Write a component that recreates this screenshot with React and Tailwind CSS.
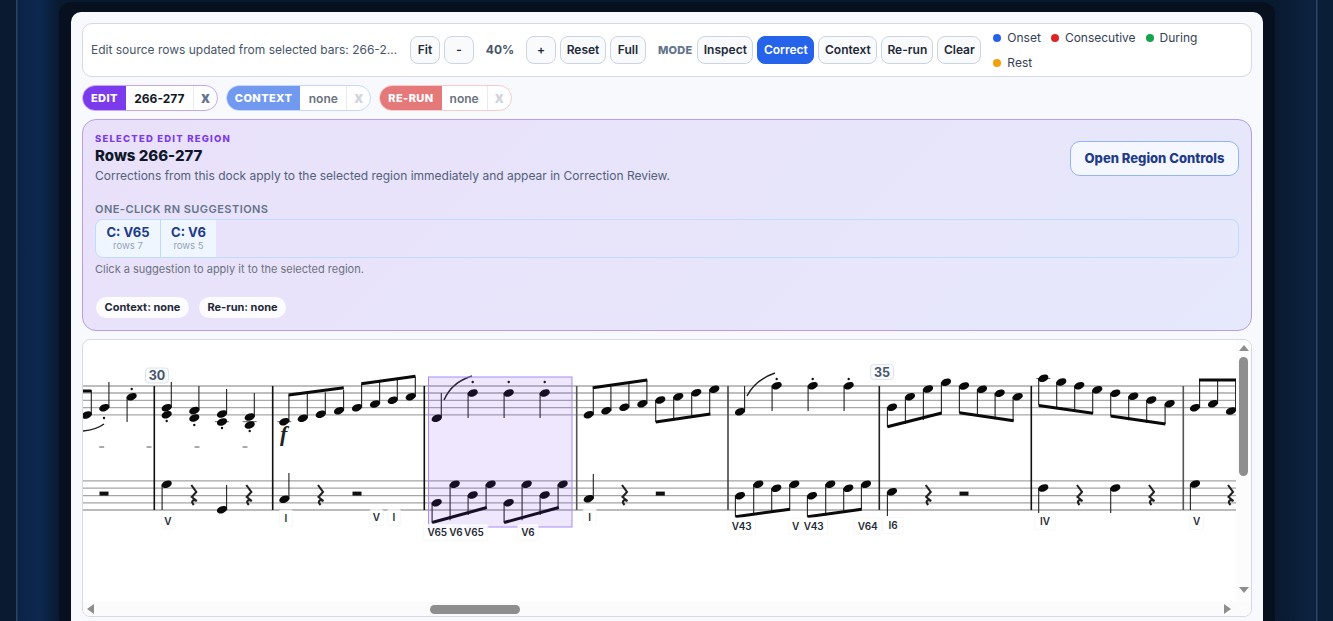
import React from "react";

const Btn = ({ children, active, w }) => (
  <button
    className={`h-[28px] shrink-0 rounded-lg border text-xs font-semibold ${w} ${
      active ? "border-[#2563eb] bg-[#2563eb] text-white" : "border-[#cbd5e1] bg-[#f8fafc] text-[#1f2937]"
    }`}
  >
    {children}
  </button>
);

const Legend = ({ color, label }) => (
  <span className="flex items-center gap-[6px] text-xs text-[#334155]">
    <span className={`h-2 w-2 rounded-full ${color}`} />
    {label}
  </span>
);

const Chip = ({ label, value, border, labelClass, valueClass, xClass, valueW }) => (
  <div className={`flex h-[26px] items-stretch overflow-hidden rounded-full border bg-white ${border}`}>
    <span className={`flex items-center px-2 pt-[1px] text-[11px] font-extrabold tracking-[0.4px] text-white ${labelClass}`}>{label}</span>
    <span className={`flex items-center justify-center pt-[1px] text-xs ${valueW} ${valueClass}`}>{value}</span>
    <span className={`flex w-[24px] items-center justify-center border-l border-[#e8eaf0] pt-[1px] text-[15px] font-extrabold ${xClass}`}>x</span>
  </div>
);

const topLines = [386, 393, 400.3, 407.6, 414.8];
const bottomLines = [480.8, 488.2, 495.6, 502.8, 510];
const bars = [
  [154.3, "#111"], [272.7, "#111"], [424.3, "#111"], [576.7, "#555"],
  [728, "#444"], [879.3, "#222"], [1031.3, "#111"], [1183.3, "#555"],
];

// x, y, stem end (null = none); the stem goes to the side the end points at
const N = ({ x, y, to }) => {
  const up = to !== undefined && to < y;
  const sx = up ? x + 4.6 : x - 4.6;
  return (
    <g>
      {to !== undefined && <line x1={sx} y1={y} x2={sx} y2={to} stroke="#222" strokeWidth="1.1" />}
      <ellipse cx={x} cy={y} rx="5.3" ry="3.5" transform={`rotate(-22 ${x} ${y})`} fill="#0a0a0a" />
    </g>
  );
};
const Beam = ({ x1, y1, x2, y2, w = 3 }) => (
  <line x1={x1} y1={y1} x2={x2} y2={y2} stroke="#0a0a0a" strokeWidth={w} />
);
const Dot = ({ x, y }) => <circle cx={x} cy={y} r="1.2" fill="#111" />;
const Dash = ({ x, y = 447 }) => <line x1={x - 2.5} y1={y} x2={x + 2.5} y2={y} stroke="#555" strokeWidth="1" />;
const Ledger = ({ x, y }) => <line x1={x - 7} y1={y} x2={x + 7} y2={y} stroke="#666" strokeWidth="1" />;
const Rest = ({ x, y = 495 }) => (
  <path
    d={`M${x - 2} ${y - 10} L${x + 3} ${y - 3} L${x - 1.5} ${y + 2} L${x + 3.5} ${y + 6} C${x} ${y + 4} ${x - 3} ${y + 6} ${x + 0.5} ${y + 10}`}
    fill="none"
    stroke="#222"
    strokeWidth="2.1"
  />
);
const HalfRest = ({ x }) => <rect x={x - 4.5} y={491.6} width="9" height="4" fill="#111" />;
const Slur = ({ d }) => <path d={d} fill="none" stroke="#222" strokeWidth="1.5" />;

// a row of notes with stems going the same way, by offset
const Run = ({ xs, ys, off }) =>
  xs.map((x, i) => <N key={x} x={x} y={ys[i]} to={ys[i] + off[i]} />);

const Measure = ({ x, y, t }) => (
  <g>
    <rect x={x - 11.5} y={y - 7.5} width="23" height="15" rx="3" fill="#f8fafc" stroke="#dfe3ea" />
    <text x={x} y={y + 4.5} textAnchor="middle" fontFamily="Inter, sans-serif" fontSize="12.5" fontWeight="700" fill="#475569">
      {t}
    </text>
  </g>
);

const labels = [
  [168, 521, "V"], [286, 518, "I"], [376.5, 517.5, "V"], [394, 517.5, "I"],
  [741.7, 526, "V43"], [795.7, 526, "V"], [813.7, 526, "V43"], [867.7, 526, "V64"], [893, 525.5, "I6"],
  [1045, 521.7, "IV"], [1196.7, 521.7, "V"], [589.7, 517, "I"],
  [437.3, 532.3, "V65"], [456, 532.3, "V6"], [474, 532.3, "V65"], [528, 532.3, "V6"],
];

const Score = () => (
  <svg viewBox="83 340 1153 262" className="block h-[262px] w-[1153px] shrink-0">
    {topLines.map((y) => (
      <line key={y} x1="82" x2="1236" y1={y} y2={y} stroke="#a8a8a8" strokeWidth="1.3" />
    ))}
    {bottomLines.map((y) => (
      <line key={y} x1="82" x2="1236" y1={y} y2={y} stroke="#a4a4a4" strokeWidth="1.3" />
    ))}
    {bars.map(([x, c]) => (
      <line key={x} x1={x} x2={x} y1="386" y2="510" stroke={c} strokeWidth="1.6" />
    ))}

    {/* bar 29 */}
    <N x={86.7} y={415} to={390} />
    <Beam x1={82} y1={391} x2={91.3} y2={391} />
    <N x={104.3} y={407.7} to={382} />
    <Dot x={104} y={418} />
    <N x={131.7} y={396.7} to={422} />
    <Dot x={131.7} y={389} />
    <Slur d="M82 431 Q96 430 104 424" />
    <Dash x={101.7} />
    <Dash x={149} />
    <HalfRest x={104} />

    {/* bar 30 */}
    <Measure x={157} y={375.5} t="30" />
    <N x={166.7} y={407.7} to={382} /><N x={166.7} y={414.7} /><Dot x={166.7} y={421} />
    <N x={194.3} y={410.5} to={386} /><N x={194.3} y={418} /><Dot x={194.3} y={425} />
    <Ledger x={222} y={421.7} />
    <N x={222} y={414} to={389} /><N x={222} y={422} /><Dot x={222} y={428} />
    <Ledger x={249.7} y={421.7} />
    <N x={249.7} y={417} to={393} /><N x={249.7} y={425} /><Dot x={249.7} y={431} />
    <Dash x={197} />
    <Dash x={245} />
    <N x={166.7} y={484.3} to={510} />
    <Rest x={193.3} />
    <N x={222} y={509.7} to={485} />
    <Rest x={248.3} />

    {/* bar 31 */}
    <Ledger x={284.3} y={421.7} />
    <Run xs={[284.3, 302.7, 320.7, 339]} ys={[421.7, 418.3, 414.3, 410.7]} off={[-27, -24.5, -22, -21]} />
    <Beam x1={288.6} y1={395} x2={343.8} y2={387.7} />
    <Run xs={[357, 375, 392.7, 410.7]} ys={[407.7, 404, 400.3, 396.7]} off={[-24, -22.5, -21, -20]} />
    <Beam x1={361.3} y1={383.7} x2={415.5} y2={376.3} />
    <text x={280} y={441} fontFamily="Liberation Serif, serif" fontStyle="italic" fontWeight="700" fontSize="22" fill="#222">f</text>
    <N x={284.3} y={499.3} to={473} />
    <Rest x={320} />
    <HalfRest x={357} />

    {/* bar 32, selected */}
    <N x={436.7} y={418.3} to={393} />
    <Slur d="M444 400 Q452 382 472 376" />
    <N x={472.7} y={393} to={418} /><Dot x={472.7} y={382} />
    <N x={508.7} y={393} to={418} /><Dot x={508.7} y={382} />
    <N x={544.7} y={393} to={418} /><Dot x={544.7} y={382} />
    <Run xs={[436.7, 454.7, 472.7, 490.7]} ys={[502.7, 484.3, 495, 484.3]} off={[20, 36, 20, 24]} />
    <Beam x1={432.1} y1={522.5} x2={486.8} y2={507.5} />
    <Run xs={[508.7, 526.7, 544.7, 562.7]} ys={[502.7, 484.3, 495, 484.3]} off={[20, 36, 20, 24]} />
    <Beam x1={504.1} y1={522.5} x2={558.8} y2={507.5} />
    <rect x="428.5" y="377" width="143.5" height="150" fill="#7c3aed" fillOpacity="0.12" stroke="#a78bfa" />

    {/* bar 33 */}
    <Run xs={[588.7, 606.3, 624.3, 642.3]} ys={[414.7, 410.7, 407.3, 403.7]} off={[-27, -25, -24, -23]} />
    <Beam x1={592.7} y1={387.7} x2={647.3} y2={380} />
    <Run xs={[660.3, 678.3, 696.3, 714.3]} ys={[400, 396.7, 392.7, 389.3]} off={[22, 23, 23, 25]} />
    <Beam x1={655.7} y1={422} x2={710.3} y2={414} />
    <N x={588.7} y={498.7} to={474} />
    <Rest x={624} />
    <HalfRest x={660.3} />

    {/* bar 34 */}
    <N x={740} y={411.7} to={386} />
    <Slur d="M747 396 Q755 380 775 373" />
    <N x={776.7} y={385.7} to={411} /><Dot x={776.7} y={379} />
    <N x={812.7} y={385.7} to={411} /><Dot x={812.7} y={379} />
    <N x={848.7} y={385.7} to={411} /><Dot x={848.7} y={379} />
    <Run xs={[740, 758.3, 776.3, 794.3]} ys={[495.7, 484.3, 488.3, 484.3]} off={[21, 31, 24, 25]} />
    <Beam x1={735.4} y1={516.7} x2={790} y2={509.3} />
    <Run xs={[812, 830.3, 848.3, 866]} ys={[495.7, 484.3, 488.3, 484.3]} off={[21, 31, 24, 25]} />
    <Beam x1={807.4} y1={516.7} x2={861.7} y2={509.3} />

    {/* bar 35 */}
    <Measure x={882} y={372} t="35" />
    <Run xs={[892, 910, 928, 946]} ys={[407.3, 396.7, 389, 382.3]} off={[20, 27, 31, 31]} />
    <Beam x1={887.4} y1={426.7} x2={941.7} y2={413} w={3.2} />
    <Run xs={[964, 982, 999.7, 1017.7]} ys={[386, 389.3, 393.3, 396.7]} off={[27, 26, 26, 24]} />
    <Beam x1={959.4} y1={412.7} x2={1013.7} y2={420.7} />
    <N x={892} y={491.7} to={516} />
    <Rest x={927.7} />
    <HalfRest x={964} />

    {/* bar 36 */}
    <Ledger x={1043.3} y={378.5} />
    <Run xs={[1043.3, 1061.3, 1079.3, 1097.3]} ys={[378.3, 382, 385.7, 389.7]} off={[27, 26, 26, 24]} />
    <Beam x1={1038.7} y1={405.5} x2={1093} y2={413.3} />
    <Run xs={[1115.3, 1133.3, 1151.3, 1169.7]} ys={[393.3, 396.3, 400, 403.7]} off={[23, 24, 23, 20]} />
    <Beam x1={1110.7} y1={416} x2={1165.4} y2={424} />
    <N x={1043.3} y={488} to={513} />
    <Rest x={1079} />
    <N x={1115.3} y={488} to={513} />
    <Rest x={1151} />

    {/* bar 37, cut off */}
    <Run xs={[1195, 1213, 1231]} ys={[407.7, 403.7, 411]} off={[-28, -24, -31]} />
    <Beam x1={1199} y1={380} x2={1236} y2={380} w={3} />
    <N x={1195} y={484} to={510} />
    <Rest x={1230} />

    {labels.map(([x, y, t]) => (
      <rect key={`${x}-${t}`} x={x - t.length * 3.6 - 3} y={y - 8} width={t.length * 7.2 + 6} height="16" fill="#fff" fillOpacity="0.8" stroke="#f3f3f6" strokeWidth="0.7" rx="1.5" />
    ))}
    {labels.map(([x, y, t]) => (
      <text key={`${x}-${t}`} x={x} y={y + 3.5} textAnchor="middle" fontFamily="Inter, sans-serif" fontSize="10" fontWeight="600" fill="#1f2937">
        {t}
      </text>
    ))}
  </svg>
);

const App = () => {
  return (
    <div className="h-screen overflow-hidden bg-[linear-gradient(90deg,#0a1a30_0,#0a1a30_16px,#2a4468_16px,#2a4468_17px,#0b2345_18px,#0d2850_40px,#091a30_59px,#091a30_1275px,#0a1d36_1290px,#0c2340_1316px,#2a4468_1316px,#2a4468_1317px,#0b1e38_1318px)] pl-[59px] pr-[58px] pt-[2px] font-['Inter',sans-serif]">
      <div className="h-full rounded-t-[12px] bg-[#07101f] px-[12px] pt-[10px]">
        <div className="flex h-full flex-col gap-2 rounded-t-[10px] bg-[#f7f9fd] p-[11px]">
          {/* toolbar */}
          <div className="flex h-[54px] shrink-0 items-center rounded-[10px] border border-[#d5d9e4] bg-white pl-2">
            <span className="w-[309px] truncate text-xs text-[#475569]">Edit source rows updated from selected bars: 266-277</span>
            <div className="ml-[10px] flex items-center gap-1">
              <Btn w="w-[30px]">Fit</Btn>
              <Btn w="w-[30px]">-</Btn>
              <span className="w-[44px] text-center text-xs font-bold text-[#475569]">40%</span>
              <Btn w="w-[30px]">+</Btn>
              <Btn w="w-[46px]">Reset</Btn>
              <Btn w="w-[36px]">Full</Btn>
            </div>
            <span className="ml-3 text-[11px] font-extrabold tracking-[0.2px] text-[#64748b]">MODE</span>
            <div className="ml-[5px] flex items-center gap-1">
              <Btn w="w-[56px]">Inspect</Btn>
              <Btn active w="w-[57px]">Correct</Btn>
              <Btn w="w-[59px]">Context</Btn>
              <Btn w="w-[52px]">Re-run</Btn>
              <Btn w="w-[44px]">Clear</Btn>
            </div>
            <div className="ml-3 flex w-[230px] flex-wrap gap-x-[10px] gap-y-[9px] pt-[1px]">
              <Legend color="bg-[#2563eb]" label="Onset" />
              <Legend color="bg-[#dc2626]" label="Consecutive" />
              <Legend color="bg-[#16a34a]" label="During" />
              <Legend color="bg-[#f59e0b]" label="Rest" />
            </div>
          </div>

          {/* range chips */}
          <div className="flex shrink-0 gap-2">
            <Chip label="EDIT" value="266-277" border="border-[#c4a8f5]" labelClass="bg-[#7c3aed]" valueClass="font-bold text-[#111827]" xClass="text-[#64748b]" valueW="w-[67px]" />
            <Chip label="CONTEXT" value="none" border="border-[#c7d7fb]" labelClass="bg-[#7199f0]" valueClass="font-semibold text-[#6b7280]" xClass="text-[#d1d5db]" valueW="w-[46px]" />
            <Chip label="RE-RUN" value="none" border="border-[#f6cccc]" labelClass="bg-[#e57878]" valueClass="font-semibold text-[#6b7280]" xClass="text-[#d1d5db]" valueW="w-[45px]" />
          </div>

          {/* selected region */}
          <div className="h-[212px] shrink-0 rounded-[14px] border border-[#b79cf0] bg-[linear-gradient(135deg,#e9e1fa,#e6e8fb)] px-3 pt-[13px]">
            <div className="flex justify-between">
              <div>
                <div className="text-[9.5px] leading-[12px] font-extrabold tracking-[1.2px] text-[#7c3aed]">SELECTED EDIT REGION</div>
                <div className="mt-[1px] text-[15px] leading-[20px] font-extrabold text-[#0f172a]">Rows 266-277</div>
                <div className="mt-[1px] text-xs leading-[18px] text-[#52607a]">
                  Corrections from this dock apply to the selected region immediately and appear in Correction Review.
                </div>
              </div>
              <button className="mt-[8px] h-[35px] w-[169px] rounded-[10px] border border-[#93b4f8] bg-[#f4f7ff] pt-[1px] text-[13px] font-extrabold text-[#1e3a8a]">
                Open Region Controls
              </button>
            </div>
            <div className="mt-[17px] text-[11px] leading-[14px] font-semibold tracking-[0.45px] text-[#64748b]">ONE-CLICK RN SUGGESTIONS</div>
            <div className="mt-[3px] flex h-[39px] overflow-hidden rounded-lg border border-[#bfdbfe]">
              <button className="w-[65px] border-r border-[#bfdbfe] bg-[#eff6ff] text-center">
                <div className="text-[13px] leading-[15px] font-bold text-[#1e3a8a]">C: V65</div>
                <div className="text-[9.5px] leading-[12px] text-[#94a3b8]">rows 7</div>
              </button>
              <button className="w-[55px] bg-[#eff6ff] text-center">
                <div className="text-[13px] leading-[15px] font-bold text-[#1e3a8a]">C: V6</div>
                <div className="text-[9.5px] leading-[12px] text-[#94a3b8]">rows 5</div>
              </button>
            </div>
            <div className="mt-[4px] text-[11px] leading-[14px] text-[#6b7280]">Click a suggestion to apply it to the selected region.</div>
            <div className="ml-[1px] mt-[21px] flex gap-[10px]">
              <span className="flex h-[21px] w-[93px] items-center justify-center rounded-full bg-white/85 text-[11px] font-bold text-[#1f2937]">Context: none</span>
              <span className="flex h-[21px] w-[87px] items-center justify-center rounded-full bg-white/85 text-[11px] font-bold text-[#1f2937]">Re-run: none</span>
            </div>
          </div>

          {/* score */}
          <div className="h-[278px] shrink-0 overflow-hidden rounded-lg border border-[#d5d9e4] bg-white">
            <div className="flex h-[262px]">
              <Score />
              <div className="flex w-[15px] flex-col items-center bg-[#fcfcfc]">
                <svg width="10" height="6" viewBox="0 0 10 6" className="mt-[5px] shrink-0"><path d="M5 0 L10 6 L0 6 Z" fill="#8e8e8e" /></svg>
                <div className="mt-[6px] h-[119px] w-[9px] rounded-full bg-[#8e8e8e]" />
                <svg width="10" height="6" viewBox="0 0 10 6" className="mt-[111px] shrink-0"><path d="M0 0 L10 0 L5 6 Z" fill="#8e8e8e" /></svg>
              </div>
            </div>
            <div className="flex h-[14px] items-center bg-[#fbfbfb] pl-[4px]">
              <svg width="7" height="10" viewBox="0 0 7 10" className="shrink-0"><path d="M7 0 L7 10 L0 5 Z" fill="#8e8e8e" /></svg>
              <div className="ml-[336px] h-[9px] w-[90px] rounded-full bg-[#8e8e8e]" />
              <svg width="7" height="10" viewBox="0 0 7 10" className="ml-[704px] shrink-0"><path d="M0 0 L0 10 L7 5 Z" fill="#8e8e8e" /></svg>
            </div>
          </div>
        </div>
      </div>
    </div>
  );
};

export default App;
